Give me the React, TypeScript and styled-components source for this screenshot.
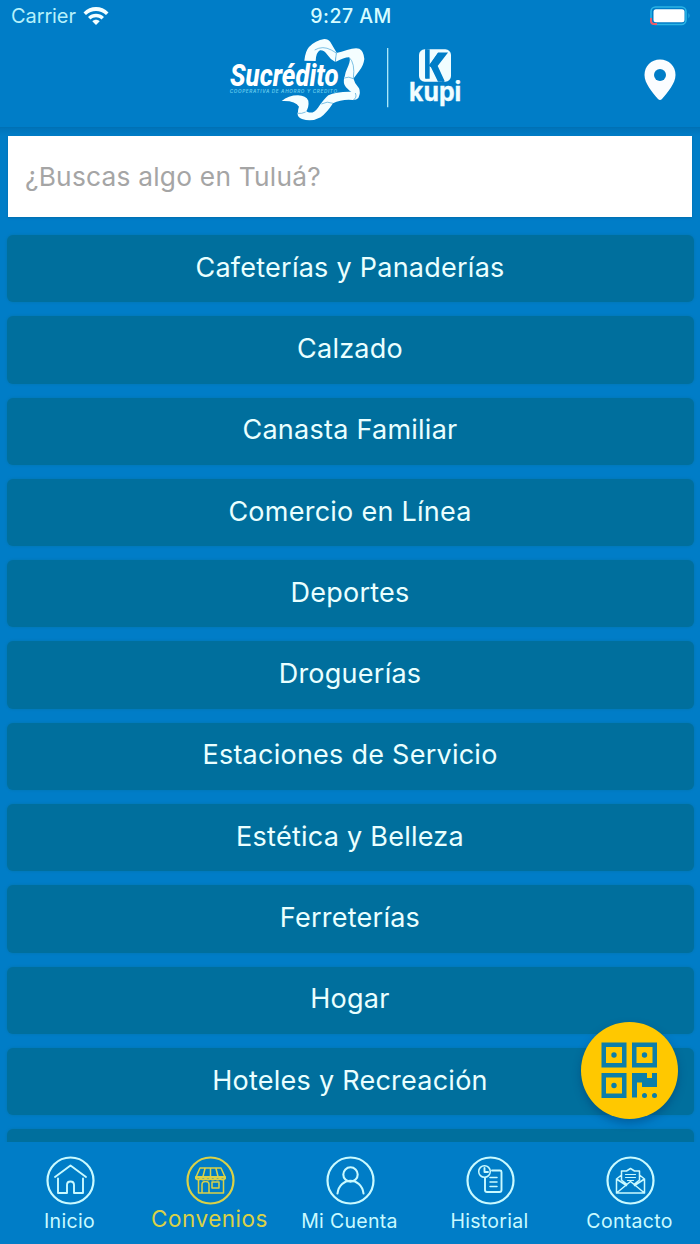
import React from "react";
import styled, { createGlobalStyle } from "styled-components";

const Global = createGlobalStyle`
  * { box-sizing: border-box; }
  body { margin: 0; background: #007dc7; }
`;

const Screen = styled.div`
  position: relative;
  width: 700px;
  height: 1244px;
  display: flex;
  flex-direction: column;
  overflow: hidden;
  background: #007dc7;
  color: #eaffff;
  font-family: Inter, "Liberation Sans", sans-serif;
`;

const StatusBar = styled.div`
  height: 32px;
  padding: 0 9px 0 11px;
  display: grid;
  grid-template-columns: 1fr auto 1fr;
  align-items: center;
`;

const Carrier = styled.span`
  display: flex;
  align-items: center;
  gap: 7px;
  font-size: 20px;
  letter-spacing: -0.1px;
  color: #b5f1fb;
`;

const Clock = styled.span`
  font-size: 19.5px;
  font-weight: 500;
  letter-spacing: 0.45px;
  color: #d6fcff;
`;

const BatterySlot = styled.span`
  display: flex;
  justify-content: flex-end;
`;

const Header = styled.header`
  height: 96px;
  padding: 0 22px 0 220px;
  display: flex;
  align-items: flex-start;
  justify-content: space-between;
  border-bottom: 1px solid #0071b5;
`;

const Body = styled.main`
  flex: 1;
  min-height: 0;
  overflow: hidden;
  padding: 8px 6px 0 7px;
  background: linear-gradient(#0073b9, #007dc7 8px);
`;

const Search = styled.input`
  display: block;
  width: 684px;
  height: 81px;
  margin: 0 0 18px 1px;
  padding: 0 17px;
  border: 0;
  outline: 0;
  border-radius: 0;
  background: #fff;
  box-shadow: 0 1px 2px #006dae;
  font-family: inherit;
  font-size: 26.3px;
  letter-spacing: 0.23px;
  color: #333;
  &::placeholder { color: #a5a5a5; opacity: 1; }
`;

const List = styled.div`
  display: flex;
  flex-direction: column;
  gap: 14px;
`;

const Category = styled.div`
  flex: none;
  height: 67.3px;
  padding: 0 1px 3px 0;
  display: flex;
  align-items: center;
  justify-content: center;
  border-radius: 6px;
  background: #006f9d;
  box-shadow: 0 0 3px #0075ac;
  font-size: 27px;
  letter-spacing: 0.25px;
`;

const TabBar = styled.nav`
  height: 102px;
  display: grid;
  grid-template-columns: repeat(5, 140px);
  background: #007dc7;
`;

const Tab = styled.div<{ $active?: boolean }>`
  padding-top: 14px;
  padding-right: 1px;
  display: flex;
  flex-direction: column;
  align-items: center;
  gap: ${(p) => (p.$active ? 0 : 2)}px;
  color: ${(p) => (p.$active ? "#d9d148" : "#c9faff")};
  font-size: ${(p) => (p.$active ? 22.5 : 19.5)}px;
  letter-spacing: ${(p) => (p.$active ? 0.5 : 0.3)}px;
  line-height: 26px;
`;

const ScanButton = styled.button`
  position: absolute;
  left: 581px;
  top: 1022px;
  width: 97px;
  height: 97px;
  padding: 0;
  border: 0;
  border-radius: 50%;
  display: flex;
  align-items: center;
  justify-content: center;
  background: #ffc800;
  box-shadow: 0 4px 8px rgba(0, 50, 100, 0.4);
`;

const Wifi = () => (
  <svg width="26" height="20" viewBox="0 0 26 20" fill="#f4ffff">
    <path d="M.5 6.400C7.500-.8 18.500-.8 25.500 6.400l-2.500 2.700c-5.600-5.600-14.400-5.600-20 0z" />
    <path d="M5 11c4.500-4.400 11.500-4.400 16 0l-2.500 2.600c-3.100-3-7.900-3-11 0z" />
    <path d="M9.300 15.300c2.100-2 5.300-2 7.400 0L13 19z" />
  </svg>
);

const Battery = () => (
  <svg width="41" height="20" viewBox="0 0 41 20">
    <rect x="1" y="1" width="35" height="17.500" rx="4.500" fill="none" stroke="#2bb4e5" strokeWidth="1.600" />
    <path d="M1 12v3q0 3 3 3h3" fill="none" stroke="#ed5b67" strokeWidth="2" />
    <rect x="3.500" y="3.300" width="31" height="13" rx="2.500" fill="#fff" />
    <path d="M38.500 7q2 2.500 0 5.500z" fill="#2bb4e5" />
  </svg>
);

const SucreditoLogo = () => (
  <svg width="160" height="96" viewBox="0 6 480 288">
    <g transform="translate(168 15)">
      <g fill="#f5feff">
        <path d="M85 77Q88 48 99 36Q118 16 145 12Q157 12 163 21L182 53L177 80Q162 72 154 59Q144 45 132 46Q120 52 119 78Z" />
        <path d="M181 54Q196 51 213 45Q235 38 250 41Q263 47 265 72Q263 91 250 107L232 131L205 129Q207 112 217 92Q225 73 219 67Q204 67 178 81Z" />
        <path d="M205 127L232 130Q235 145 249 160Q255 173 247 189Q242 195 231 195L238 179Q221 170 210 157Q200 146 205 127Z" />
        <path d="M240 171Q246 182 231 195Q196 192 171 205Q153 233 134 247Q107 262 78 252Q64 248 65 235L69 215L95 231Q112 238 126 218Q144 192 157 181Q184 168 240 171Z" />
        <path d="M17 198Q37 181 66 181Q90 182 97 197Q100 216 89 231L65 238L69 215Q58 196 17 198Z" />
      </g>
      <g fill="none" stroke="#3fa1d6" strokeWidth="2">
        <path d="M116 45Q140 31 166 45L181 54L178 81M219 67Q238 83 232 131M205 129Q218 123 232 131M232 195Q244 188 238 174M136 207Q154 197 171 205M66 235Q76 237 89 231" />
      </g>
    </g>
    <text x="30" y="168" fill="#fff" stroke="#007dc7" strokeWidth="8" paintOrder="stroke" fontFamily="Roboto, sans-serif" fontStyle="italic" fontWeight="800" fontSize="94" textLength="326" lengthAdjust="spacingAndGlyphs">Sucrédito</text>
    <text x="29" y="189" fill="#66cbed" fontFamily="Inter, sans-serif" fontStyle="italic" fontWeight="600" fontSize="14" textLength="322">COOPERATIVA DE AHORRO Y CRÉDITO</text>
  </svg>
);

const KupiLogo = () => (
  <svg width="110" height="85" viewBox="0 0 330 255">
    <path d="M38 39V217" stroke="#a9e8fa" strokeWidth="4" />
    <rect x="132" y="43" width="96" height="97" rx="17" fill="#f1fdff" />
    <path d="M154 43V130M164 94L191 56H212L184 92L206 140" fill="none" stroke="#007dc7" strokeWidth="7" />
    <path d="M151 43h13v88h-13zM164 90L189 54h24L184 91l22 49h-17L169 99z" fill="#007dc7" />
    <text x="102" y="198" fill="#f1fdff" stroke="#f1fdff" strokeWidth="1" fontFamily="Inter, sans-serif" fontWeight="700" fontSize="78" textLength="157" lengthAdjust="spacingAndGlyphs">kupi</text>
  </svg>
);

const Brand = styled.div`
  display: flex;
  align-items: flex-start;
`;

const KupiSlot = styled.div`
  margin: 3px 0 0 -5px;
`;

const PinSlot = styled.div`
  padding-top: 26px;
`;

const Pin = () => (
  <svg width="36" height="44" viewBox="0 0 36 44">
    <path d="M18 1.500C9 1.500 2.500 8 2.500 17c0 8.500 8 17.500 13.500 24q2 2 4 0C25.500 34.500 33.500 25.500 33.500 17 33.500 8 27 1.500 18 1.500z" fill="#fbfdff" />
    <circle cx="18" cy="17" r="6" fill="#007dc7" />
  </svg>
);

const Qr = () => (
  <svg width="57" height="57" viewBox="0 0 57 57">
    <g fill="none" stroke="#0b7ea9" strokeWidth="4.500">
      <rect x="2.750" y="2.750" width="20.500" height="20.500" />
      <rect x="33.250" y="2.750" width="20.500" height="20.500" />
      <rect x="2.750" y="33.250" width="20.500" height="20.500" />
    </g>
    <g fill="#0b7ea9">
      <circle cx="13" cy="13" r="2.700" />
      <circle cx="43.500" cy="13" r="2.700" />
      <circle cx="13" cy="43.500" r="2.700" />
      <path d="M31 31h15v5h5v-5h5v14H41v-4.500h-5v15h-5z" />
      <circle cx="43.500" cy="53.500" r="2.500" />
      <circle cx="53.500" cy="53.500" r="2.500" />
    </g>
  </svg>
);

const TabIcon = ({ children }: { children: React.ReactNode }) => (
  <svg width="50" height="50" viewBox="0 0 50 50" fill="none" stroke="currentColor" strokeWidth="1.500" strokeLinecap="round" strokeLinejoin="round">
    <circle cx="25.500" cy="24.500" r="23" strokeWidth="2.200" />
    {children}
  </svg>
);

const tabs = [
  { name: "Inicio", icon: <path strokeWidth="1.900" d="M10 21L25.500 9.500 41 21M13 22.500V37H22v-8q0-3.500 3.500-3.500T29 29v8h9V22.500" /> },
  {
    name: "Convenios",
    icon: (
      <>
        <path d="M15 12h21l4 9H11zM13.500 24v13h25V24M17 36.500v-8q0-3 3.500-3t3.500 3v8M27 26h7v6h-7zM20 12.500l-2 8M25.500 12.500v8M31 12.500l2 8" />
        <path strokeWidth="2" d="M11 21v1.500q2.500 2 4.800 0 2.400 2 4.800 0 2.400 2 4.800 0 2.400 2 4.800 0 2.400 2 4.800 0 2.500 2 5 0V21z" />
      </>
    ),
  },
  {
    name: "Mi Cuenta",
    icon: <g strokeWidth="2.100"><circle cx="25.500" cy="18.500" r="7.200" /><path d="M12.500 37.500C14.500 20.500 36.500 20.500 38.500 37.500" /></g>,
  },
  {
    name: "Historial",
    icon: (
      <>
        <circle cx="19.500" cy="15.500" r="5.800" />
        <path d="M19.500 12v4H23M27 14.500h8q1.500 0 1.500 1.500v18q0 2-2 2H22q-2 0-2-2V22" strokeWidth="1.900" />
        <path d="M25 21.500h7M25 26h7M25 30.500h7" />
      </>
    ),
  },
  {
    name: "Contacto",
    icon: (
      <>
        <path d="M11.500 37V23l5-4v-4h5l4-2.500 4 2.500h5v4l5 4v14zM11.500 37l14-11.500L39.500 37M11.500 23l10 6.500M39.500 23l-10 6.500M16.500 18v6l5 4M34.500 18v6l-5 4" />
        <path d="M20.500 18.500h10M20.500 21.500h10M22.500 24.500h6" strokeWidth="1.200" />
      </>
    ),
  },
];

const categories = [
  "Cafeterías y Panaderías",
  "Calzado",
  "Canasta Familiar",
  "Comercio en Línea",
  "Deportes",
  "Droguerías",
  "Estaciones de Servicio",
  "Estética y Belleza",
  "Ferreterías",
  "Hogar",
  "Hoteles y Recreación",
];

export default function App() {
  return (
    <Screen>
      <Global />
      <StatusBar>
        <Carrier>Carrier <Wifi /></Carrier>
        <Clock>9:27 AM</Clock>
        <BatterySlot><Battery /></BatterySlot>
      </StatusBar>
      <Header>
        <Brand>
          <SucreditoLogo />
          <KupiSlot><KupiLogo /></KupiSlot>
        </Brand>
        <PinSlot><Pin /></PinSlot>
      </Header>
      <Body>
        <Search placeholder="¿Buscas algo en Tuluá?" />
        <List>
          {categories.map((name) => (
            <Category key={name}>{name}</Category>
          ))}
          <Category />
        </List>
      </Body>
      <TabBar>
        {tabs.map((tab) => (
          <Tab key={tab.name} $active={tab.name === "Convenios"}>
            <TabIcon>{tab.icon}</TabIcon>
            {tab.name}
          </Tab>
        ))}
      </TabBar>
      <ScanButton aria-label="QR"><Qr /></ScanButton>
    </Screen>
  );
}
